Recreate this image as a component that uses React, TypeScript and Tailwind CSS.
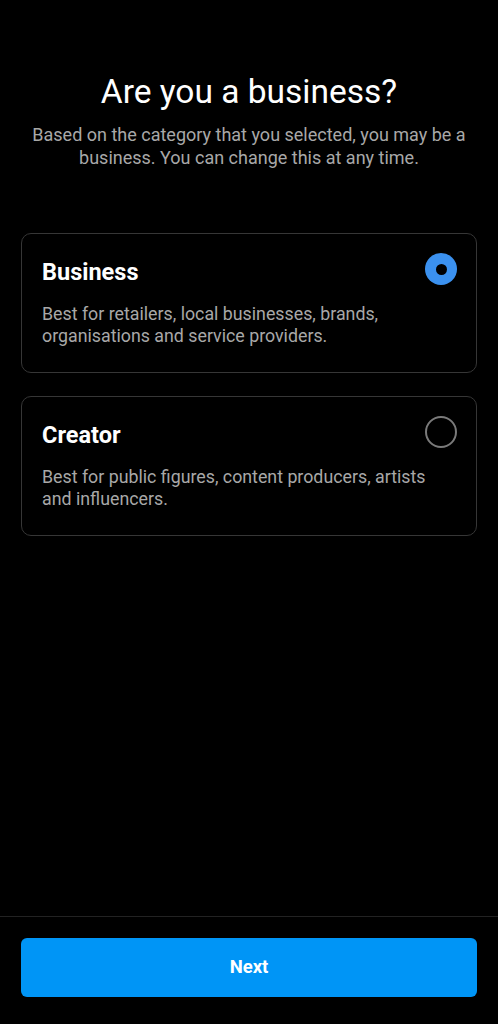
import { useState } from "react";

const options = [
  {
    id: "business",
    title: "Business",
    text: "Best for retailers, local businesses, brands, organisations and service providers.",
  },
  {
    id: "creator",
    title: "Creator",
    text: "Best for public figures, content producers, artists and influencers.",
  },
];

function Radio({ checked }: { checked: boolean }) {
  if (checked) {
    return (
      <span className="flex h-[32px] w-[32px] shrink-0 items-center justify-center rounded-full bg-[#3b91ef]">
        <span className="h-[11px] w-[11px] rounded-full bg-black" />
      </span>
    );
  }
  return <span className="block h-[32px] w-[32px] shrink-0 rounded-full border-[2.5px] border-[#7a7a7a]" />;
}

export default function App() {
  const [selected, setSelected] = useState("business");

  return (
    <div className="flex h-[1024px] flex-col bg-black font-['Roboto',sans-serif] text-white">
      <div className="flex flex-1 flex-col px-[21px] pt-[73px]">
        <h1 className="text-center text-[33.5px] leading-[38px] font-normal">Are you a business?</h1>
        <p className="mt-[12px] text-center text-[18px] leading-[23px] text-[#a8a8a8]">
          Based on the category that you selected, you may be a business. You can change this at any time.
        </p>

        <div className="mt-[64px] flex flex-col gap-[23px]">
          {options.map((o) => (
            <button
              key={o.id}
              type="button"
              onClick={() => setSelected(o.id)}
              className="flex flex-col rounded-[10px] border border-[#363636] pt-[19px] pr-[19px] pb-[26px] pl-[20px] text-left"
            >
              <div className="flex w-full items-start justify-between">
                <div className="pt-[6px] text-[23.5px] leading-[26px] font-bold">{o.title}</div>
                <Radio checked={selected === o.id} />
              </div>
              <p className="mt-[18px] max-w-[400px] text-[17.8px] leading-[21.5px] text-[#a8a8a8]">{o.text}</p>
            </button>
          ))}
        </div>
      </div>

      <div className="border-t border-[#222222] px-[21px] pt-[21px] pb-[27px]">
        <button
          type="button"
          className="flex h-[59px] w-full items-center justify-center rounded-[6px] bg-[#0095f6] text-[18.5px] font-bold text-white"
        >
          Next
        </button>
      </div>
    </div>
  );
}
